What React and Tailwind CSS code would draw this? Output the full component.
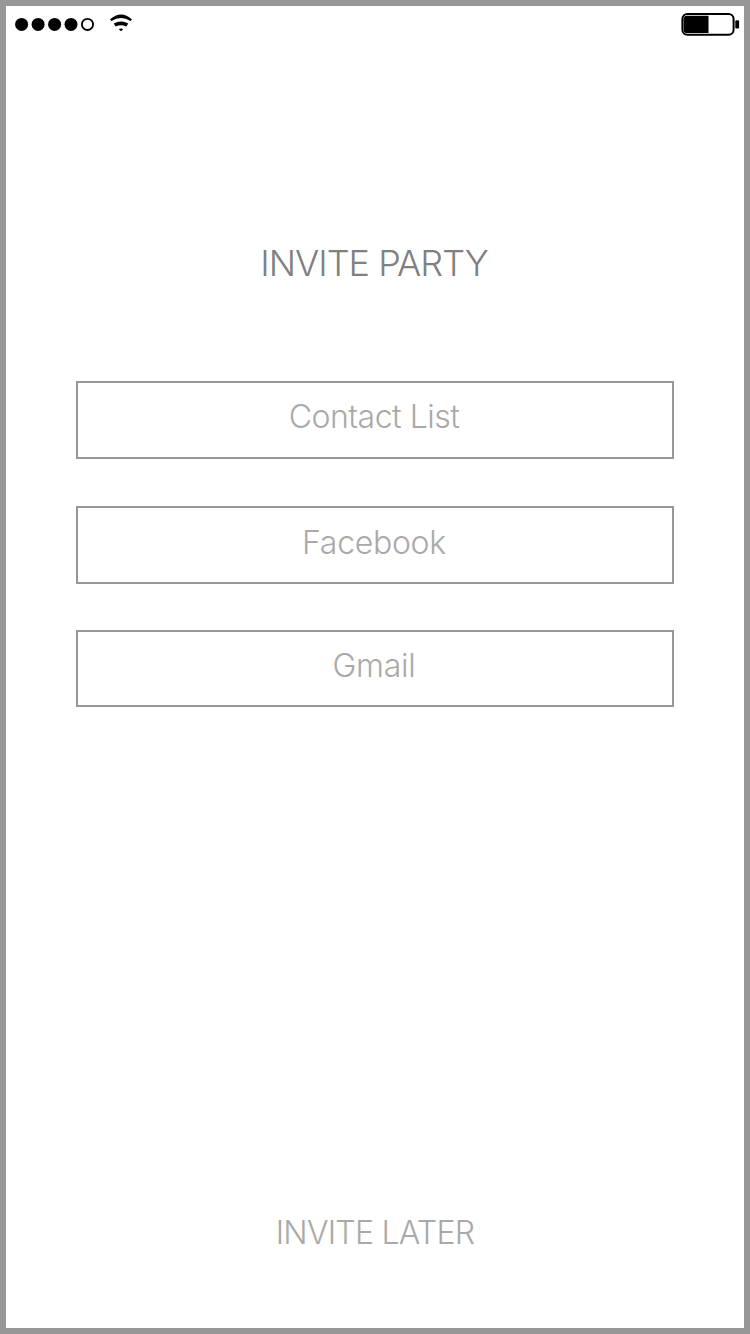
function StatusBar() {
  return (
    <header className="flex h-9 items-center justify-between pl-[9px] pr-1">
      <div className="flex items-center">
        <svg width="120" height="24" viewBox="15 12 120 24" aria-hidden="true">
          <g fill="#000">
            <circle cx="21.6" cy="24.4" r="6.5" />
            <circle cx="38.1" cy="24.4" r="6.5" />
            <circle cx="54.6" cy="24.4" r="6.5" />
            <circle cx="71" cy="24.4" r="6.5" />
            <path d="M110 19.4 Q121 9.4 132 19.4 L130.5 21 Q121 15 111.5 21 Z" />
            <path d="M113.7 23.6 Q121 19.6 128.3 23.6 L126.3 26.5 Q121 23.8 115.7 26.5 Z" />
            <path d="M118.8 29.2 Q121 27.9 123.2 29.2 L121 31.2 Z" />
          </g>
          <circle cx="87.5" cy="24.4" r="5.6" fill="none" stroke="#000" strokeWidth="1.8" />
        </svg>
      </div>
      <svg width="60" height="24" viewBox="680 12 60 24" aria-hidden="true">
        <rect x="682.4" y="14" width="51.2" height="20.8" rx="5" fill="#fff" stroke="#000" strokeWidth="2" />
        <path d="M708.5 15.7H687a3.4 3.4 0 0 0-3.4 3.4v10.6a3.4 3.4 0 0 0 3.4 3.4h21.5z" fill="#000" />
        <rect x="735.3" y="20.2" width="3.8" height="8.3" rx="1.3" fill="#000" />
      </svg>
    </header>
  );
}

export default function App() {
  return (
    <main className="flex h-[1334px] w-[750px] flex-col border-6 border-[#979797] bg-white font-['Inter','Liberation_Sans',sans-serif] font-light">
      <StatusBar />
      <h1 className="mt-[199px] pr-[2px] text-center text-[36px] leading-[44px] tracking-[-1px] text-[#808080]">INVITE PARTY</h1>
      <div className="mt-[95.5px] flex flex-col px-[70px] text-[32px] text-[#a9a9a9]">
        <button className="h-[78px] border-2 border-[#979797] pr-[2px] pb-[6px] tracking-[-0.5px]">Contact List</button>
        <button className="mt-[47.5px] h-[77.5px] border-2 border-[#979797] pr-[2px] pb-[3px] tracking-[-0.3px]">Facebook</button>
        <button className="mt-[46px] h-[77.5px] border-2 border-[#979797] pr-[2px] pb-[5px] tracking-[-0.2px]">Gmail</button>
      </div>
      <button className="mx-auto mt-auto mb-[75px] text-[32px] leading-[40px] tracking-[-0.75px] text-[#a9a9a9]">INVITE LATER</button>
    </main>
  );
}
